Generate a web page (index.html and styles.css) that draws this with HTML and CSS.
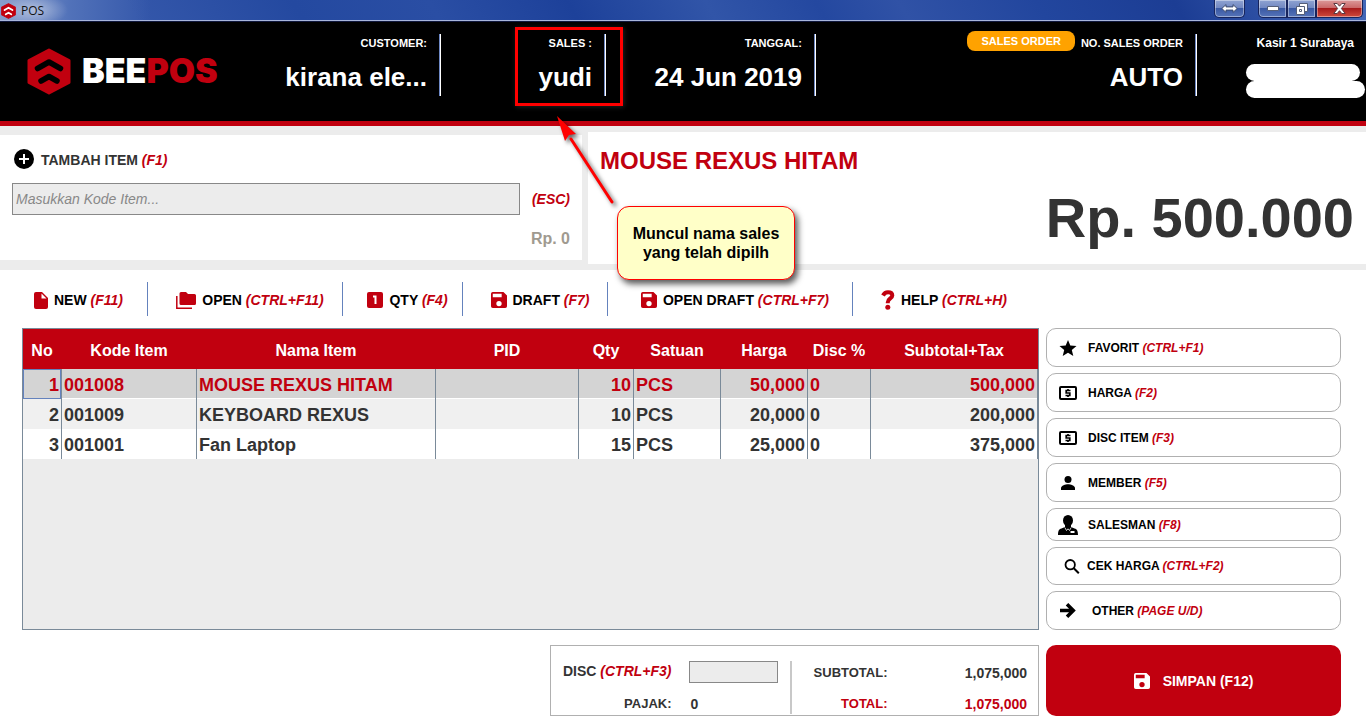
FILE: index.html
```html
<!DOCTYPE html>
<html lang="id">
<head>
<meta charset="utf-8">
<meta name="viewport" content="width=device-width, initial-scale=1">
<title>POS</title>
<link rel="stylesheet" href="styles.css">
</head>
<body>
<svg class="sprite" aria-hidden="true">
  <symbol id="hex" viewBox="0 0 44 47">
    <path fill="#c1000f" stroke="#c1000f" stroke-width="3" stroke-linejoin="round" d="M22 2 42 12.500v22L22 45 2 34.500v-22z"/>
    <path class="hex-cut" fill="none" stroke-width="5.500" stroke-linecap="round" stroke-linejoin="round" d="m10.500 20.500 11.500-6.500 11.500 6.500M14 33l8-4.500 8 4.500"/>
  </symbol>
  <symbol id="save" viewBox="3 3 18 18"><path fill="currentColor" d="M17 3H5a2 2 0 0 0-2 2v14a2 2 0 0 0 2 2h14a2 2 0 0 0 2-2V7zm-5 16a3 3 0 1 1 0-6 3 3 0 0 1 0 6zm3-10H5V5h10z"/></symbol>
  <symbol id="money" viewBox="0 0 18 14">
    <rect x="1" y="1" width="16" height="12" rx="1" fill="none" stroke="currentColor" stroke-width="2"/>
    <path d="M11.500 4.500H7.200V7h3.600v2.500H6.500M9 3v1.500M9 9.500V11" fill="none" stroke="currentColor" stroke-width="1.700"/>
  </symbol>
</svg>

<div class="titlebar">
  <svg class="titlebar-icon"><use href="#hex"/></svg>
  <span class="titlebar-name">POS</span>
  <div class="win">
    <button class="win-btn win-single" aria-label="Resize"><svg width="17" height="9" viewBox="0 0 17 9"><path fill="#fff" stroke="#38486e" d="M.8 4.500 5 .6v2.300h7V.6l4.200 3.900L12 8.400V6.100H5v2.300z"/></svg></button>
    <div class="win-group">
      <button class="win-btn" aria-label="Minimize"><svg width="12" height="5" viewBox="0 0 12 5"><path fill="#fff" stroke="#555f78" d="M.5.5h11v4H.5z"/></svg></button>
      <button class="win-btn" aria-label="Restore"><svg width="12" height="12" viewBox="0 0 12 12"><g fill="#fff" stroke="#555f78"><path d="M3.500.5h8v8h-8z"/><path d="M.5 3.500h8v8h-8z"/><path d="M3.500 6.500h2v2h-2z"/></g></svg></button>
      <button class="win-btn win-close" aria-label="Close"><svg width="13" height="11" viewBox="0 0 13 11"><path fill="#fff" stroke="#5a3a42" d="M.8.5h3.400l2.300 2.700L8.800.5h3.400L8.400 5.500l3.800 5H8.800L6.500 7.700l-2.300 2.800H.8l3.800-5z"/></svg></button>
    </div>
  </div>
</div>

<header class="header">
  <div class="info">
    <div class="brand">
      <svg class="brand-icon"><use href="#hex"/></svg>
      <span class="brand-name">BEE<b>POS</b></span>
    </div>
    <div class="info-text">
      <div class="info-label">CUSTOMER:</div>
      <div class="info-value">kirana ele...</div>
    </div>
  </div>
  <div class="info">
    <div class="info-text">
      <div class="info-label">SALES :</div>
      <div class="info-value">yudi</div>
    </div>
    <div class="mark"></div>
    <svg class="arrow" viewBox="0 0 62 94" aria-hidden="true">
      <path d="M57 88 16 25" stroke="#f00" stroke-width="3" stroke-linecap="round"/>
      <path d="M2 2l19 18-7 1-4 6z" fill="#f00"/>
    </svg>
    <div class="callout">Muncul nama sales<br>yang telah dipilh</div>
  </div>
  <div class="info">
    <div class="info-text">
      <div class="info-label">TANGGAL:</div>
      <div class="info-value">24 Jun 2019</div>
    </div>
  </div>
  <div class="info">
    <div class="info-text">
      <div class="info-label"><span class="badge">SALES ORDER</span>NO. SALES ORDER</div>
      <div class="info-value">AUTO</div>
    </div>
  </div>
  <div class="info info-user">
    <div class="user-name">Kasir 1 Surabaya</div>
    <div class="redacted"><span></span><span></span></div>
  </div>
</header>

<section class="entry">
  <form class="panel add">
    <label class="add-title" for="kode">
      <svg width="20" height="20" viewBox="0 0 20 20"><circle cx="10" cy="10" r="10"/><path stroke="#fff" stroke-width="2" d="M10 5v10M5 10h10"/></svg>
      <span>TAMBAH ITEM <em>(F1)</em></span>
    </label>
    <div class="add-row">
      <input id="kode" class="add-input" type="text" placeholder="Masukkan Kode Item...">
      <em>(ESC)</em>
    </div>
    <div class="add-price">Rp. 0</div>
  </form>
  <div class="panel current">
    <h1 class="current-name">MOUSE REXUS HITAM</h1>
    <div class="current-total">Rp. 500.000</div>
  </div>
</section>

<nav class="toolbar">
  <button class="tool"><svg width="14" height="17" viewBox="0 0 14 17"><path fill="currentColor" d="M2 0h6l6 6v9a2 2 0 0 1-2 2H2a2 2 0 0 1-2-2V2a2 2 0 0 1 2-2z"/><path fill="#fff" d="M7.500 1.500v5h5z"/></svg><span>NEW <em>(F11)</em></span></button>
  <button class="tool"><svg width="20" height="17" viewBox="0 0 20 17"><path fill="currentColor" d="M5 0h5l2 2h6.500A1.500 1.500 0 0 1 20 3.500v8a1.500 1.500 0 0 1-1.500 1.500H5a1.500 1.500 0 0 1-1.500-1.500v-10A1.500 1.500 0 0 1 5 0z"/><path fill="none" stroke="currentColor" stroke-width="1.500" d="M.8 4v12.200H16"/></svg><span>OPEN <em>(CTRL+F11)</em></span></button>
  <button class="tool"><svg width="16" height="16" viewBox="0 0 16 16"><rect width="16" height="16" rx="2" fill="currentColor"/><path fill="none" stroke="#fff" stroke-width="2" d="M6 4.500h2.500V12"/></svg><span>QTY <em>(F4)</em></span></button>
  <button class="tool"><svg width="16" height="16"><use href="#save"/></svg><span>DRAFT <em>(F7)</em></span></button>
  <button class="tool"><svg width="16" height="16"><use href="#save"/></svg><span>OPEN DRAFT <em>(CTRL+F7)</em></span></button>
  <button class="tool tool-help"><svg width="14" height="20" viewBox="0 0 14 20"><path fill="none" stroke="currentColor" stroke-width="4" d="M2 5.500C3 3.500 4.500 2.200 7 2.200c2.700 0 4.300 1.300 4.300 3.300 0 3-4.500 3-4.500 6.800v1"/><circle cx="6.800" cy="17.300" r="2.500" fill="currentColor"/></svg><span>HELP <em>(CTRL+H)</em></span></button>
</nav>

<main class="work">
  <div class="items">
    <table class="grid">
      <colgroup><col class="c-no"><col class="c-kode"><col class="c-nama"><col class="c-pid"><col class="c-qty"><col class="c-sat"><col class="c-harga"><col class="c-disc"><col class="c-sub"></colgroup>
      <thead><tr><th>No</th><th>Kode Item</th><th>Nama Item</th><th>PID</th><th>Qty</th><th>Satuan</th><th>Harga</th><th>Disc %</th><th>Subtotal+Tax</th></tr></thead>
      <tbody>
        <tr class="selected"><td class="num focus">1</td><td>001008</td><td>MOUSE REXUS HITAM</td><td></td><td class="num">10</td><td>PCS</td><td class="num">50,000</td><td>0</td><td class="num">500,000</td></tr>
        <tr class="even"><td class="num">2</td><td>001009</td><td>KEYBOARD REXUS</td><td></td><td class="num">10</td><td>PCS</td><td class="num">20,000</td><td>0</td><td class="num">200,000</td></tr>
        <tr><td class="num">3</td><td>001001</td><td>Fan Laptop</td><td></td><td class="num">15</td><td>PCS</td><td class="num">25,000</td><td>0</td><td class="num">375,000</td></tr>
      </tbody>
    </table>
  </div>

  <aside class="side">
    <button class="side-btn"><svg width="17" height="16" viewBox="0 0 17 16"><path d="m8.500 0 2.300 5.500 6.200.5-4.700 4 1.500 6-5.300-3.200L3.200 16l1.500-6L0 6l6.200-.5z"/></svg><span>FAVORIT <em>(CTRL+F1)</em></span></button>
    <button class="side-btn"><svg width="17" height="14"><use href="#money"/></svg><span>HARGA <em>(F2)</em></span></button>
    <button class="side-btn"><svg width="17" height="14"><use href="#money"/></svg><span>DISC ITEM <em>(F3)</em></span></button>
    <button class="side-btn"><svg width="14" height="14" viewBox="0 0 14 14"><circle cx="7" cy="3.500" r="3.500"/><path d="M0 14v-2c0-2.500 4.500-3.800 7-3.800s7 1.300 7 3.800v2z"/></svg><span>MEMBER <em>(F5)</em></span></button>
    <button class="side-btn side-salesman"><svg width="20" height="20" viewBox="0 0 20 20"><ellipse cx="10" cy="5.500" rx="5" ry="5.500"/><path d="M7 9h6v4H7z"/><path d="M0 20c0-4 .8-6 3.500-6.600L7 12h6l3.500 1.400C19.200 14 20 16 20 20z"/><path fill="none" stroke="#fff" stroke-width=".8" d="m6.800 12.500 1.700 3L10 13.800l1.500 1.700 1.700-3"/><rect x="12.500" y="16" width="4" height="2" fill="#fff"/></svg><span>SALESMAN <em>(F8)</em></span></button>
    <button class="side-btn side-cek"><svg width="15" height="15" viewBox="0 0 15 15"><circle cx="5.700" cy="5.700" r="4.700" fill="none" stroke="#000" stroke-width="1.800"/><path d="m9 9 5.300 5.300" stroke="#000" stroke-width="2"/></svg><span>CEK HARGA <em>(CTRL+F2)</em></span></button>
    <button class="side-btn side-other"><svg width="16" height="15" viewBox="0 0 16 15"><path fill="none" stroke="#000" stroke-width="3.500" d="M0 7.500h13M7 1.200l6.300 6.300L7 13.800"/></svg><span>OTHER <em>(PAGE U/D)</em></span></button>
  </aside>

  <div class="totals">
    <div class="totals-left">
      <label class="t-disc" for="disc">DISC <em>(CTRL+F3)</em></label>
      <input id="disc" class="disc-input" type="text">
      <span class="t-label">PAJAK:</span>
      <span class="t-num t-start">0</span>
    </div>
    <div class="totals-right">
      <span class="t-label">SUBTOTAL:</span><span class="t-num">1,075,000</span>
      <span class="t-label t-red">TOTAL:</span><span class="t-num t-red">1,075,000</span>
    </div>
  </div>

  <button class="submit"><svg width="16" height="16"><use href="#save"/></svg><span>SIMPAN (F12)</span></button>
</main>
</body>
</html>
```

FILE: styles.css
```css
* {
  box-sizing: border-box;
}

body {
  margin: 0;
  min-height: 100vh;
  display: flex;
  flex-direction: column;
  background: #fff;
  color: #333;
  font: bold 14px/20px "Liberation Sans", Arial, sans-serif;
}

button,
input {
  margin: 0;
  font: inherit;
  color: inherit;
}

button {
  cursor: pointer;
}

svg {
  flex: none;
}

em {
  color: #c1000f;
}

.sprite {
  position: absolute;
  width: 0;
  height: 0;
}

/* Window title bar */
.titlebar {
  display: flex;
  align-items: center;
  gap: 5px;
  height: 22px;
  padding-right: 3px;
  border-bottom: 1px solid #10183c;
  box-shadow: inset 0 -1px #a9b6dc;
  background:
    radial-gradient(ellipse 34px 16px at 34px 10px, rgba(255, 255, 255, .45), transparent),
    linear-gradient(90deg, rgba(150, 170, 210, .85), rgba(110, 140, 200, .5) 70px, transparent 150px),
    linear-gradient(60deg, #3457aa 0 10%, #2449a0 22%, #2a4ea4 32%, #1d419a 42%, #3155a8 52%, #2448a0 60%, #3052a6 66%, #22469e 76%, #1c3d94 86%, #4468b8);
}

.titlebar-icon {
  width: 15px;
  height: 16px;
  margin-left: 1px;
  stroke: #fff;
}

.titlebar-name {
  color: #111;
  font: 12px/16px "Open Sans", "Noto Sans", sans-serif;
}

.win {
  display: flex;
  align-self: flex-start;
  gap: 13px;
  margin-left: auto;
}

.win-group {
  display: flex;
}

.win-btn {
  display: flex;
  align-items: center;
  justify-content: center;
  width: 29px;
  height: 18px;
  padding: 0;
  border: 1px solid #17245c;
  border-top: 0;
  background: linear-gradient(#8fa3d2, #6f86c0 50%, #3a59a4 50%, #5674b8);
  box-shadow: inset 0 0 0 1px rgba(255, 255, 255, .4);
}

.win-single,
.win-group .win-btn:first-child {
  border-bottom-left-radius: 5px;
}

.win-single,
.win-close {
  border-bottom-right-radius: 5px;
}

.win-single {
  width: 31px;
}

.win-close {
  width: 47px;
  background: linear-gradient(#dc9a9a, #c96464 50%, #a81c1c 50%, #cf4a3c);
}

/* Header */
.header {
  display: grid;
  grid-template-columns: 441fr 165fr 210fr 381fr 169fr;
  min-height: 104px;
  border-bottom: 5px solid #c1000f;
  background: #000;
  color: #fff;
}

.info {
  position: relative;
  display: flex;
  justify-content: flex-end;
  padding: 9px 14px 19px 0;
  background: linear-gradient(90deg, #6d87c4 50%, #fff 50%) right 12px / 2px 62px no-repeat;
}

.info:last-child {
  background: none;
}

.brand {
  display: flex;
  align-items: center;
  gap: 11px;
  margin: 14px auto 0 27px;
  height: 52px;
}

.brand-icon {
  width: 44px;
  height: 47px;
  stroke: #000;
}

.brand-name {
  font: 900 34px/36px Inter, "Open Sans", sans-serif;
}

.brand-name b {
  color: #c1000f;
  font-weight: 900;
}

.info-text {
  text-align: right;
  white-space: nowrap;
}

.info-label {
  display: flex;
  justify-content: flex-end;
  gap: 6px;
  font-size: 11px;
  line-height: 25px;
}

.badge {
  height: 20px;
  padding: 0 14px;
  border-radius: 8px;
  background: #ffa200;
  line-height: 21px;
}

.info-value {
  margin-top: 6px;
  font-size: 26px;
  line-height: 30px;
}

.info-user {
  flex-direction: column;
  justify-content: flex-start;
  padding-right: 0;
}

.user-name {
  padding-right: 12px;
  text-align: right;
  font-size: 12px;
  line-height: 25px;
}

.redacted {
  display: flex;
  flex-direction: column;
  margin: 8px 1px 0 49px;
}

.redacted span {
  height: 17px;
  border-radius: 9px;
  background: #fff;
}

.redacted span:first-child {
  margin-right: 5px;
}

/* Annotation over the screen */
.mark {
  position: absolute;
  top: 5px;
  right: -17px;
  width: 108px;
  height: 79px;
  border: 3px solid #f00;
  box-shadow: 1px 1px 5px #222;
}

.arrow {
  position: absolute;
  z-index: 2;
  top: 92px;
  right: -11px;
  width: 62px;
  height: 94px;
  filter: drop-shadow(3px 3px 2px rgba(0, 0, 0, .6));
}

.callout {
  position: absolute;
  z-index: 2;
  top: 184px;
  right: -189px;
  width: 178px;
  padding: 17px 0;
  border: 1px solid #f00;
  border-radius: 12px;
  background: #ffffc8;
  box-shadow: 3px 4px 6px rgba(0, 0, 0, .65);
  color: #000;
  text-align: center;
  white-space: nowrap;
  font-size: 16px;
  line-height: 19px;
}

/* Item entry and current item */
.entry {
  display: grid;
  grid-template-columns: 582fr 778fr;
  gap: 6px;
  padding: 6px 0;
  background: #ececec;
}

.panel {
  background: #fff;
}

.add {
  display: flex;
  flex-direction: column;
  gap: 14px;
  margin: 3px 0 4px;
  padding: 14px 12px 11px;
}

.add-title {
  display: flex;
  gap: 7px;
  padding-left: 2px;
  line-height: 22px;
  height: 20px;
}

.add-row {
  display: flex;
  align-items: center;
  gap: 12px;
}

.add-input {
  flex: 1;
  min-width: 0;
  height: 32px;
  padding: 0 3px;
  border: 1px solid #888;
  background: #ececec;
  font-weight: normal;
}

.add-input::placeholder {
  color: #888;
  font-style: italic;
  opacity: 1;
}

.add-price {
  color: #a09a90;
  text-align: right;
  font-size: 16px;
}

.current {
  padding: 12px;
}

.current-name {
  margin: 0 0 10px;
  color: #c1000f;
  font-size: 24px;
  line-height: 34px;
}

.current-total {
  text-align: right;
  font-size: 56px;
  line-height: 60px;
}

/* Toolbar */
.toolbar {
  display: grid;
  grid-template-columns: 148px 195px 120px 145px 245px auto;
  padding: 12px 0;
}

.tool {
  display: flex;
  align-items: center;
  justify-content: center;
  gap: 6px;
  height: 34px;
  padding: 2px 0 0 10px;
  border: 0;
  border-right: 1px solid #6482bd;
  background: none;
  color: #000;
  white-space: nowrap;
}

.tool svg {
  color: #c1000f;
}

.tool-help {
  justify-content: flex-start;
  padding-left: 28px;
  border: 0;
}

/* Work area */
.work {
  flex: 1;
  display: grid;
  grid-template-columns: minmax(0, 1fr) 295px;
  grid-template-rows: 1fr auto;
  gap: 15px 7px;
  padding: 0 25px 9px 22px;
}

.items {
  border: 1px solid #7a8a99;
  background: #ececec;
}

.grid {
  width: 100%;
  table-layout: fixed;
  border-collapse: separate;
  border-spacing: 0;
}

.c-no { width: 39px; }
.c-kode { width: 135px; }
.c-nama { width: 239px; }
.c-pid { width: 143px; }
.c-qty { width: 55px; }
.c-sat { width: 87px; }
.c-harga { width: 87px; }
.c-disc { width: 63px; }
.c-sub { width: 167px; }

.grid th {
  height: 40px;
  padding: 4px 1px 0 0;
  background: #c1000f;
  color: #fff;
  font-size: 16px;
}

.grid td {
  height: 30px;
  padding: 1px 2px 0;
  border-right: 1px solid #7a8a99;
  background: #fff;
  font-size: 18px;
  white-space: nowrap;
}

.grid .num {
  text-align: right;
}

.grid .selected td {
  background: #d4d4d4;
  box-shadow: inset 0 -1px #fff;
  color: #c1000f;
}

.grid .selected .focus {
  box-shadow: inset 0 -1px #fff, inset 0 0 0 2px #6482bd;
  box-shadow: inset 0 -1px #6482bd, inset 0 0 0 1px #6482bd;
}

.grid .even td {
  background: #f0f0f0;
}

.side {
  display: flex;
  flex-direction: column;
  gap: 6px;
}

.side-btn {
  display: flex;
  align-items: center;
  gap: 10px;
  height: 39px;
  padding: 0 11px;
  border: 1px solid #b0b0b0;
  border-radius: 10px;
  background: #fff;
  color: #000;
  font-size: 12px;
}

.side-btn svg {
  width: 20px;
}

.side-salesman {
  height: 33px;
}

.side-cek {
  height: 38px;
  padding-left: 15px;
  gap: 5px;
}

.side-other {
  gap: 14px;
}

.totals {
  justify-self: end;
  display: flex;
  width: 489px;
  min-height: 71px;
  padding: 15px 11px 1px 12px;
  border: 1px solid #b0b0b0;
}

.totals-left {
  display: grid;
  grid-template-columns: auto 89px;
  align-content: space-between;
  gap: 0 17px;
  padding-right: 12px;
  border-right: 2px solid #c8c8c8;
}

.totals-right {
  flex: 1;
  display: grid;
  grid-template-columns: 96px 1fr;
  align-content: end;
  row-gap: 11px;
  text-align: right;
}

.disc-input {
  width: 89px;
  height: 22px;
  padding: 0 3px;
  border: 1px solid #888;
  background: #ececec;
}

.t-label {
  text-align: right;
  font-size: 13px;
}

.t-start {
  padding-left: 2px;
}

.t-red {
  color: #c1000f;
}

.submit {
  display: flex;
  align-items: center;
  justify-content: center;
  gap: 13px;
  border: 0;
  border-radius: 10px;
  background: #c1000f;
  color: #fff;
}
```
